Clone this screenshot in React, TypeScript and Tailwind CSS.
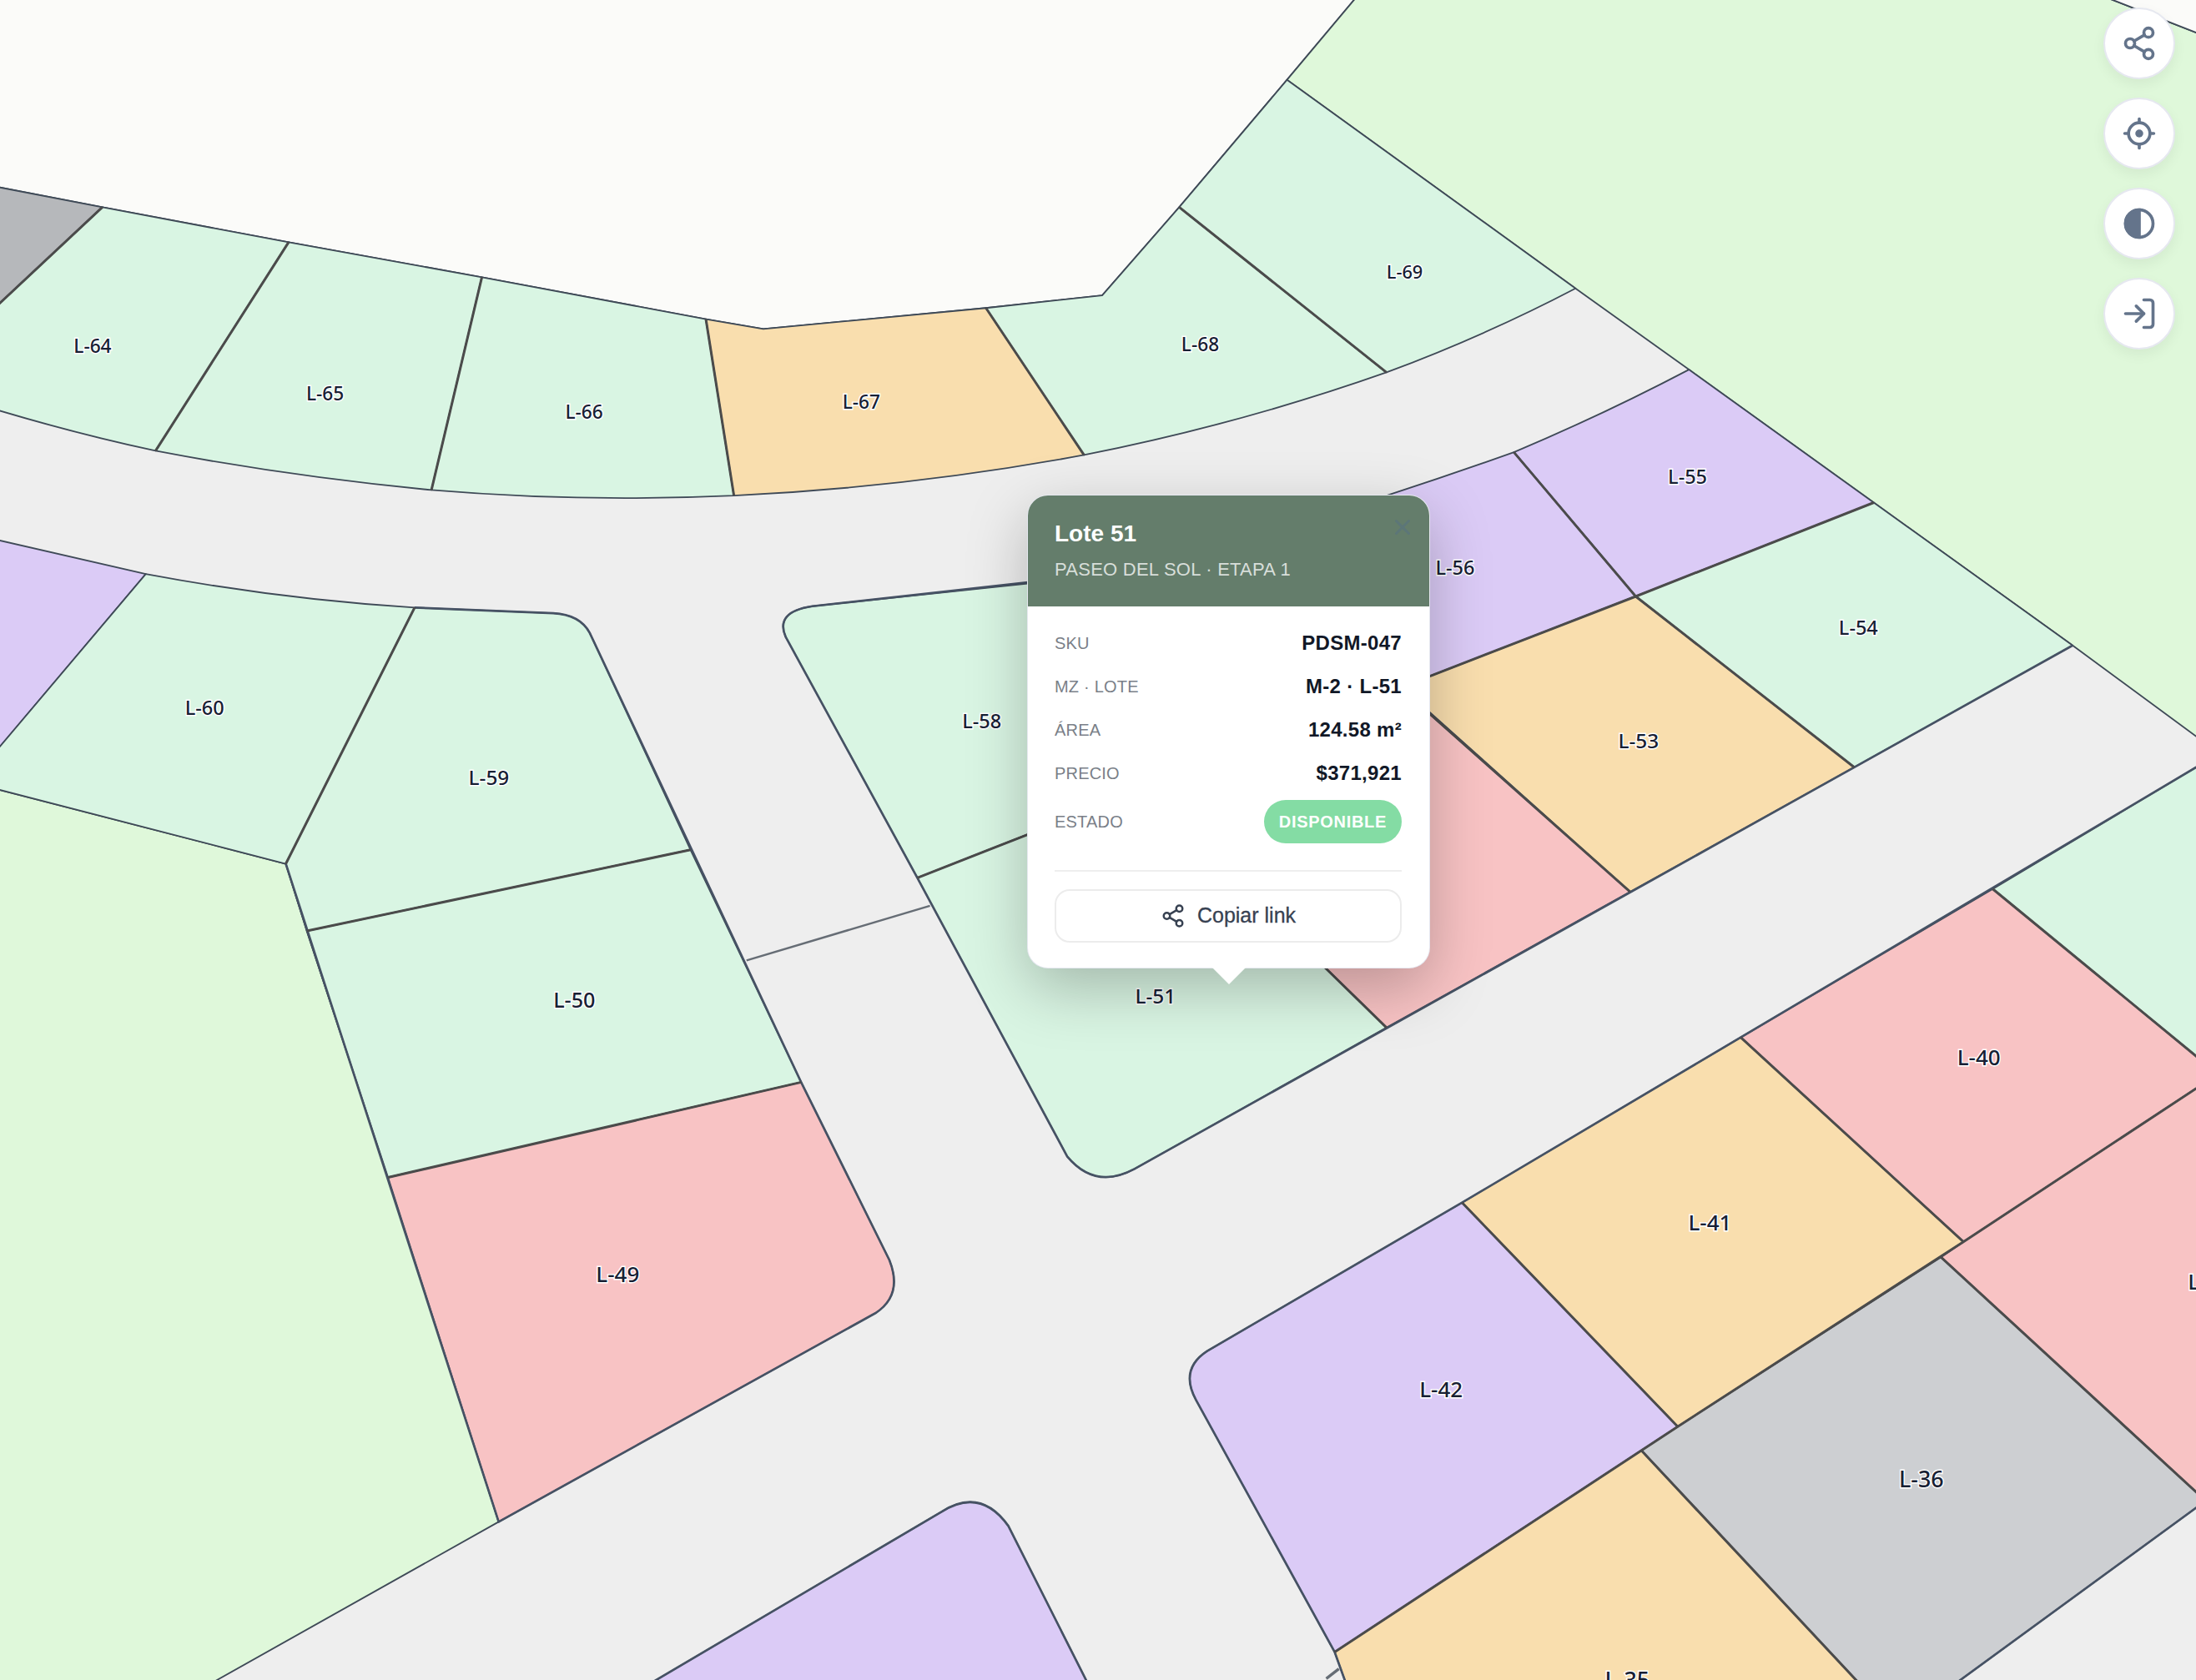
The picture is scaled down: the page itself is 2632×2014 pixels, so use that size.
import { Share2, LogIn, X } from "lucide-react";

const parcels: { d: string; fill: string }[] = [
  // open areas
  { d: "M-5,-5 L971,-5 L919,57 L842,148 L787,211 L704,220 L545,235 L504,228 L344,198 L206,173 L73,148 L-5,133 Z", fill: "#fbfbf9" },
  { d: "M971,-5 L1496,-5 L1575,26 L1575,531 L1480,461 L1338,359 L1206,264 L1125,206 L919,57 Z", fill: "#dff8da" },
  { d: "M1496,-5 L1575,-5 L1575,26 Z", fill: "#fbfbf9" },
  { d: "M-5,563 L204,617 L219,665 L277,841 L356,1087 L146,1205 L-5,1205 Z", fill: "#dff8da" },
  // top row
  { d: "M-5,133 L73,148 L-5,221 Z", fill: "#b6b8bb" },
  { d: "M73,148 L206,173 L111,322 Q55,310 -5,292 L-5,221 Z", fill: "#d9f5e3" },
  { d: "M206,173 L344,198 L308,350 Q205,340 111,322 Z", fill: "#d9f5e3" },
  { d: "M344,198 L504,228 L524,354 Q415,359 308,350 Z", fill: "#d9f5e3" },
  { d: "M504,228 L545,235 L704,220 L774,325 Q650,348 524,354 Z", fill: "#f9deae" },
  { d: "M704,220 L787,211 L842,148 L990,266 Q885,303 774,325 Z", fill: "#d9f5e3" },
  { d: "M842,148 L919,57 L1125,206 Q1060,240 990,266 Z", fill: "#d9f5e3" },
  // right block
  { d: "M1206,264 L1338,359 L1168,426 L1081,323 Q1145,296 1206,264 Z", fill: "#dbcbf6" },
  { d: "M1081,323 L1168,426 L1021,483 L960,506 L900,400 L990,354 Q1036,339 1081,323 Z", fill: "#dbcbf6" },
  { d: "M1338,359 L1480,461 L1324,548 L1168,426 Z", fill: "#d9f5e3" },
  { d: "M1168,426 L1324,548 L1164,637 L1000,490 L1021,483 Z", fill: "#f9deae" },
  { d: "M1021,510 L1164,637 L990,734 L946,691 L900,640 L960,500 Z", fill: "#f8c3c4" },
  { d: "M580,433 L760,414 L800,570 L655,627 L561,455 Q553,437 580,433 Z", fill: "#d9f5e3" },
  { d: "M655,627 L800,570 L900,640 L946,691 L990,734 L810,835 Q782,850 762,826 Z", fill: "#d9f5e3" },
  // left block
  { d: "M-5,385 L104,410 L-5,539 Z", fill: "#dbcbf6" },
  { d: "M104,410 Q200,428 296,434 L204,617 L-5,563 L-5,539 Z", fill: "#d9f5e3" },
  { d: "M296,434 L395,438 Q414,439 421,452 L493,607 L219,665 L204,617 Z", fill: "#d9f5e3" },
  { d: "M219,665 L493,607 L572,773 L277,841 Z", fill: "#d9f5e3" },
  { d: "M277,841 L572,773 L635,900 Q645,925 625,938 L356,1087 Z", fill: "#f8c3c4" },
  // bottom block
  { d: "M1575,544 L1423,635 L1575,760 Z", fill: "#d9f5e3" },
  { d: "M1423,635 L1575,760 L1575,773 L1402,887 L1243,741 Z", fill: "#f8c3c4" },
  { d: "M1243,741 L1402,887 L1198,1019 L1044,859 Z", fill: "#f9deae" },
  { d: "M1044,859 L1198,1019 L953,1180 L854,1000 Q842,978 862,965 Z", fill: "#dbcbf6" },
  { d: "M1402,887 L1575,773 L1575,1072 L1386,898 Z", fill: "#f8c3c4" },
  { d: "M1386,898 L1575,1072 L1393,1205 L1330,1205 L1172,1036 L1198,1019 Z", fill: "#cdcfd2" },
  { d: "M1172,1036 L1330,1205 L962,1205 L953,1180 Z", fill: "#f9deae" },
  { d: "M460,1205 L672,1080 Q700,1062 720,1090 L778,1205 Z", fill: "#dbcbf6" },
];

const labels: [string, number, number, number][] = [
  ["L-64", 66, 247, 13.5],
  ["L-65", 232, 281, 13.5],
  ["L-66", 417, 294, 13.5],
  ["L-67", 615, 287, 13.5],
  ["L-68", 857, 246, 13.5],
  ["L-69", 1003, 194, 13],
  ["L-55", 1205, 340, 14],
  ["L-56", 1039, 405, 14],
  ["L-54", 1327, 448, 14],
  ["L-53", 1170, 529, 14.5],
  ["L-58", 701, 515, 14],
  ["L-60", 146, 505, 14],
  ["L-59", 349, 555, 14.5],
  ["L-50", 410, 714, 15],
  ["L-51", 825, 711, 14.5],
  ["L-49", 441, 910, 15.5],
  ["L-40", 1413, 755, 15.5],
  ["L-41", 1221, 873, 15.5],
  ["L-42", 1029, 992, 15.5],
  ["L-36", 1372, 1056, 16],
  ["L-35", 1162, 1200, 16],
  ["L", 1566.5, 915, 15.5],
];

const details: [string, string][] = [
  ["SKU", "PDSM-047"],
  ["MZ · LOTE", "M-2 · L-51"],
  ["ÁREA", "124.58 m²"],
  ["PRECIO", "$371,921"],
];

function LocateIcon() {
  return (
    <svg width="44" height="44" viewBox="0 0 24 24" fill="none" stroke="#64748b" strokeWidth="2" strokeLinecap="round">
      <circle cx="12" cy="12" r="7" />
      <circle cx="12" cy="12" r="2.6" fill="#64748b" stroke="none" />
      <path d="M12 2.5v2.5M12 19v2.5M2.5 12H5M19 12h2.5" />
    </svg>
  );
}

function ContrastIcon() {
  return (
    <svg width="44" height="44" viewBox="0 0 24 24" fill="none" stroke="#64748b" strokeWidth="2">
      <circle cx="12" cy="12" r="9" />
      <path d="M12 3a9 9 0 0 0 0 18Z" fill="#64748b" />
    </svg>
  );
}

function RoundButton({ children }: { children: React.ReactNode }) {
  return (
    <button className="flex h-[86px] w-[86px] items-center justify-center rounded-full border-2 border-[#e6e8f0] bg-white shadow-[0_6px_16px_rgba(0,0,0,0.06)]">
      {children}
    </button>
  );
}

export default function App() {
  return (
    <div className="relative h-[2014px] w-[2632px] overflow-hidden bg-[#eeeeee]">
      <svg viewBox="0 0 1568 1200" className="block h-full w-full">
        <g stroke="#3f4a57" strokeWidth="1.1" strokeLinejoin="round">
          {parcels.map((p) => (
            <path key={p.d} d={p.d} fill={p.fill} />
          ))}
        </g>
        {/* edges along the roads, slate and a little heavier */}
        <path
          d="M204,617 L356,1087 L625,938 Q645,925 635,900 L572,773 L421,452 Q414,439 395,438 L296,434 M655,627 L561,455 Q553,437 580,433 L734,416 M655,627 L762,826 Q782,850 810,835 L1480,461 M1575,544 L1044,859 L862,965 Q842,978 854,1000 L953,1180 L962,1205 M460,1205 L672,1080 Q700,1062 720,1090 L778,1205 M1575,1072 L1393,1205"
          fill="none"
          stroke="#465264"
          strokeWidth="1.6"
          strokeLinejoin="round"
        />
        {/* shared boundaries between lots */}
        <path
          d="M73,148 L-5,221 M206,173 L111,322 M344,198 L308,350 M504,228 L524,354 M704,220 L774,325 M842,148 L990,266 M1081,323 L1168,426 L1338,359 M1168,426 L1324,548 M1021,483 L1168,426 M1021,510 L1164,637 M296,434 L204,617 M219,665 L493,607 M277,841 L572,773 M1423,635 L1575,760 M1243,741 L1402,887 M1044,859 L1198,1019 M1386,898 L1575,1072 M1172,1036 L1330,1205 M953,1180 L1198,1019 L1402,887 L1575,773 M655,627 L734,596 M946,691 L990,734"
          fill="none"
          stroke="#4b4b4b"
          strokeWidth="1.8"
          strokeLinejoin="round"
        />
        <path d="M533,686 L664,647" fill="none" stroke="#666d75" strokeWidth="1.5" />
        <path d="M947,1199 L956,1192" fill="none" stroke="#666d75" strokeWidth="2" />
        <g
          className="font-['Noto_Sans',sans-serif] font-medium [paint-order:stroke]"
          fill="#172033"
          stroke="#ffffff"
          strokeWidth="1.7"
          textAnchor="middle"
          dominantBaseline="central"
        >
          {labels.map(([text, x, y, size]) => (
            <text key={text} x={x} y={y} fontSize={size}>
              {text}
            </text>
          ))}
        </g>
      </svg>

      {/* map controls */}
      <div className="absolute right-[25px] top-[9px] flex flex-col gap-[22px]">
        <RoundButton>
          <Share2 size={44} color="#64748b" strokeWidth={2} />
        </RoundButton>
        <RoundButton>
          <LocateIcon />
        </RoundButton>
        <RoundButton>
          <ContrastIcon />
        </RoundButton>
        <RoundButton>
          <LogIn size={44} color="#64748b" strokeWidth={2} />
        </RoundButton>
      </div>

      {/* lot popover */}
      <div className="absolute left-[1232px] top-[594px] w-[481px] font-['Liberation_Sans',sans-serif]">
        <div className="overflow-hidden rounded-[24px] bg-white shadow-[0_24px_72px_rgba(0,0,0,0.25)] ring-1 ring-[#e6e8f0]">
          <div className="relative h-[133px] bg-[#647d6b] px-[32px] pt-[29px]">
            <div className="text-[28px] font-bold leading-[34px] text-white">Lote 51</div>
            <div className="mt-[13px] text-[22px] leading-[26px] tracking-[0.25px] text-white/75">
              PASEO DEL SOL · ETAPA 1
            </div>
            <X size={30} color="#5c7678" strokeWidth={2.4} className="absolute right-[17px] top-[23px]" />
          </div>
          <div className="pb-[30px] pl-[32px] pr-[33px] pt-[18px]">
            {details.map(([label, value]) => (
              <div key={label} className="flex h-[52px] items-center justify-between">
                <span className="text-[20px] tracking-[0.2px] text-[#7a7f88]">{label}</span>
                <span className="text-[24px] font-bold tracking-[0.3px] text-[#111827]">{value}</span>
              </div>
            ))}
            <div className="mt-[6px] flex h-[52px] items-center justify-between">
              <span className="text-[20px] tracking-[0.2px] text-[#7a7f88]">ESTADO</span>
              <span className="flex h-[52px] items-center rounded-full bg-[#84dca4] px-[18px] text-[20px] font-bold tracking-[0.7px] text-white">
                DISPONIBLE
              </span>
            </div>
            <div className="mt-[32px] h-[2px] bg-[#eeeeee]" />
            <button className="mt-[21px] flex h-[64px] w-full items-center justify-center gap-[14px] rounded-[18px] border-2 border-[#ececec] bg-white text-[25px] text-[#374151] [-webkit-text-stroke:0.3px]">
              <Share2 size={30} color="#374151" strokeWidth={2} />
              Copiar link
            </button>
          </div>
        </div>
        <div className="mx-auto h-0 w-0 border-x-[20px] border-t-[20px] border-x-transparent border-t-white" />
      </div>
    </div>
  );
}
